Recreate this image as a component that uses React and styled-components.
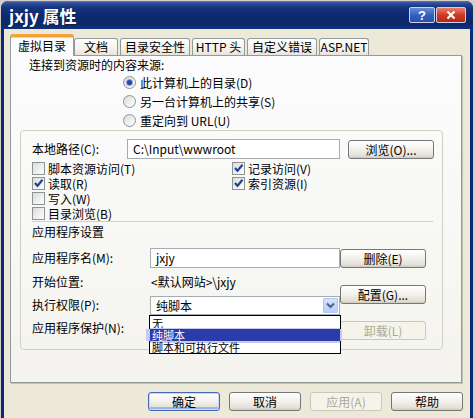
import React from 'react';
import styled, { createGlobalStyle, css } from 'styled-components';

const GlobalStyle = createGlobalStyle`
  html, body {
    margin: 0;
    padding: 0;
  }
  body {
    background: #d4d0c8;
    overflow: hidden;
    font-family: "Noto Sans CJK SC", "Liberation Sans", sans-serif;
    font-size: 12px;
    color: #000;
  }
  * { box-sizing: border-box; }
`;

const tabs = [
  { label: '虚拟目录', w: 60, active: true },
  { label: '文档', w: 44 },
  { label: '目录安全性', w: 70 },
  { label: 'HTTP 头', w: 53 },
  { label: '自定义错误', w: 70 },
  { label: 'ASP.NET', w: 50 },
];

const sources = [
  { label: '此计算机上的目录(D)', on: true },
  { label: '另一台计算机上的共享(S)' },
  { label: '重定向到 URL(U)' },
];

const checks = [
  { label: '脚本资源访问(T)' },
  { label: '记录访问(V)', on: true },
  { label: '读取(R)', on: true },
  { label: '索引资源(I)', on: true },
  { label: '写入(W)' },
  { label: '' },
  { label: '目录浏览(B)' },
];

const Checkbox = ({ on, children }) => (
  <CheckRow>
    <CheckBox>
      {on && (
        <svg width="11" height="11" viewBox="0 0 11 11">
          <path d="M2 5 L4.5 7.8 L9.5 1.8" fill="none" stroke="#21429c" strokeWidth="2.2" />
        </svg>
      )}
    </CheckBox>
    <span>{children}</span>
  </CheckRow>
);

const App = () => {
  return (
    <>
      <GlobalStyle />
      <Window>
        <TitleBar>
          <Title>jxjy 属性</Title>
          <TitleButtons>
            <HelpBtn>?</HelpBtn>
            <CloseBtn>
              <svg width="10" height="10" viewBox="0 0 10 10">
                <path d="M1.5 1.5 L8.5 8.5 M8.5 1.5 L1.5 8.5" stroke="#fff" strokeWidth="2.2" />
              </svg>
            </CloseBtn>
          </TitleButtons>
        </TitleBar>

        <Client>
          <TabStrip>
            {tabs.map((t) => (
              <Tab key={t.label} $w={t.w} $active={t.active}>{t.label}</Tab>
            ))}
          </TabStrip>

          <Panel>
            <Caption>连接到资源时的内容来源:</Caption>
            <RadioGroup>
              {sources.map((s) => (
                <RadioRow key={s.label}>
                  <RadioDot $on={s.on} />
                  <span>{s.label}</span>
                </RadioRow>
              ))}
            </RadioGroup>

            <Frame>
              <PathRow>
                <PathLabel>本地路径(C):</PathLabel>
                <TextBox $w={213}>C:\Input\wwwroot</TextBox>
                <Button>浏览(O)...</Button>
              </PathRow>

              <CheckGrid>
                {checks.map((c, i) =>
                  c.label ? <Checkbox key={i} on={c.on}>{c.label}</Checkbox> : <span key={i} />
                )}
              </CheckGrid>

              <Separator />
              <SectionTitle>应用程序设置</SectionTitle>

              <Lower>
                <FieldGrid>
                  <FieldLabel>应用程序名(M):</FieldLabel>
                  <TextBox $w={190}>jxjy</TextBox>

                  <FieldLabel>开始位置:</FieldLabel>
                  <FieldText>&lt;默认网站&gt;\jxjy</FieldText>

                  <FieldLabel>执行权限(P):</FieldLabel>
                  <Select>
                    <span>纯脚本</span>
                    <ArrowBtn>
                      <svg width="11" height="11" viewBox="0 0 11 11">
                        <path d="M2 3.5 L5.5 7 L9 3.5" fill="none" stroke="#4d6185" strokeWidth="2" />
                      </svg>
                    </ArrowBtn>
                    <DropList>
                      <DropItem>无</DropItem>
                      <DropItem $selected>纯脚本</DropItem>
                      <DropItem>脚本和可执行文件</DropItem>
                    </DropList>
                  </Select>

                  <FieldLabel>应用程序保护(N):</FieldLabel>
                  <span />
                </FieldGrid>

                <SideButtons>
                  <Button>删除(E)</Button>
                  <Button>配置(G)...</Button>
                  <Button $variant="disabled">卸载(L)</Button>
                </SideButtons>
              </Lower>
            </Frame>
          </Panel>

          <Footer>
            <Button $variant="focus" $w={72}>确定</Button>
            <Button $w={72}>取消</Button>
            <Button $variant="disabled" $w={72}>应用(A)</Button>
            <Button $w={72}>帮助</Button>
          </Footer>
        </Client>
      </Window>
    </>
  );
};

export default App;

const Window = styled.div`
  margin: 1px 2px 0 1px;
  width: 472px;
  height: 417px;
  display: flex;
  flex-direction: column;
  background: #0d2b74;
  border-radius: 7px 7px 0 0;
  overflow: hidden;
`;

const TitleBar = styled.div`
  height: 28px;
  flex: none;
  display: flex;
  align-items: center;
  justify-content: space-between;
  padding: 0 7px 0 8px;
  background: linear-gradient(
    to bottom,
    #5a78c4 0px,
    #2f4f9f 2px,
    #17367f 6px,
    #0d2a72 14px,
    #0c2869 22px,
    #10307c 28px
  );
`;

const Title = styled.div`
  color: #fff;
  font-weight: bold;
  font-size: 17px;
  line-height: 20px;
  text-shadow: 1px 1px 0 #0a1d4c;
  padding-top: 1px;
`;

const TitleButtons = styled.div`
  display: flex;
  gap: 1px;
`;

const titleBtn = css`
  height: 16px;
  display: flex;
  align-items: center;
  justify-content: center;
  border: 1px solid #c9d3ec;
  border-radius: 2px;
  color: #fff;
  font-family: "Liberation Sans", sans-serif;
  font-weight: bold;
  font-size: 13px;
`;

const HelpBtn = styled.div`
  ${titleBtn};
  width: 26px;
  background: linear-gradient(to bottom, #6b8ad4, #3560c0 50%, #2a50ac);
`;

const CloseBtn = styled.div`
  ${titleBtn};
  width: 30px;
  background: linear-gradient(to bottom, #e9806e, #cf3a24 50%, #b9260f);
`;

const Client = styled.div`
  flex: 1;
  margin: 0 3px;
  background: #ece9d8;
  padding: 5px 7px 0 6px;
  display: flex;
  flex-direction: column;
`;

const TabStrip = styled.div`
  height: 21px;
  display: flex;
  align-items: flex-end;
  gap: 2px;
  padding-left: 2px;
`;

const Tab = styled.div`
  width: ${(p) => p.$w}px;
  height: 17px;
  display: flex;
  align-items: center;
  justify-content: center;
  border: 1px solid #919b9c;
  border-bottom: none;
  border-radius: 3px 3px 0 0;
  background: linear-gradient(to bottom, #fffffe, #f3f2ec 60%, #e6e4da);
  line-height: 14px;
  white-space: nowrap;
  ${(p) =>
    p.$active &&
    css`
      position: relative;
      z-index: 2;
      width: ${p.$w + 4}px;
      height: 22px;
      margin: 0 -2px -1px;
      border-top: 3px solid #f2a33a;
      box-shadow: inset 0 1px 0 #ffd36b;
      background: #fcfcfe;
      padding-bottom: 1px;
    `}
`;

const Panel = styled.div`
  width: 452px;
  height: 328px;
  flex: none;
  border: 1px solid #919b9c;
  box-shadow: 1px 1px 0 #c3c1b4;
  background: linear-gradient(to bottom, #fcfcfe, #f7f7f4 60%, #f4f3ee);
  padding-top: 1px;
`;

const Caption = styled.div`
  margin-left: 18px;
  line-height: 16px;
`;

const RadioGroup = styled.div`
  display: flex;
  flex-direction: column;
  padding-left: 112px;
`;

const RadioRow = styled.div`
  height: 19px;
  display: flex;
  align-items: center;
  gap: 4px;
  line-height: 14px;
`;

const RadioDot = styled.span`
  width: 13px;
  height: 13px;
  border-radius: 50%;
  border: 1px solid #8a939b;
  background: linear-gradient(135deg, #dcdcd7, #ffffff);
  display: flex;
  align-items: center;
  justify-content: center;
  &::after {
    content: '';
    display: ${(p) => (p.$on ? 'block' : 'none')};
    width: 5px;
    height: 5px;
    border-radius: 50%;
    background: #2a47a6;
    box-shadow: 0 0 0 1px #8fa4dc;
  }
`;

const Frame = styled.div`
  width: 423px;
  margin-left: 9px;
  border: 1px solid #d0d0bf;
  border-radius: 4px;
  padding: 8px 0 8px 11px;
`;

const PathRow = styled.div`
  display: flex;
  align-items: flex-start;
`;

const PathLabel = styled.div`
  width: 95px;
  line-height: 20px;
`;

const TextBox = styled.div`
  width: ${(p) => p.$w}px;
  height: 20px;
  border: 1px solid #a5acb2;
  background: #fff;
  padding-left: 5px;
  line-height: 18px;
  margin-right: 8px;
  white-space: nowrap;
`;

const Button = styled.div`
  width: ${(p) => p.$w || 86}px;
  height: 19px;
  flex: none;
  display: flex;
  align-items: center;
  justify-content: center;
  margin-top: 1px;
  border: 1px solid #767676;
  border-radius: 3px;
  background: linear-gradient(to bottom, #ffffff, #f3f2ee 45%, #e4e1d8 85%, #cfcbbf);
  line-height: 14px;
  white-space: nowrap;
  ${(p) =>
    p.$variant === 'focus' &&
    css`
      border-color: #4866b8;
      box-shadow: inset 0 0 0 1px #c8d8f8, inset 0 -2px 0 1px #9ab6ec;
    `}
  ${(p) =>
    p.$variant === 'disabled' &&
    css`
      border-color: #c9c7ba;
      background: #f5f4ea;
      color: #aca899;
    `}
`;

const CheckGrid = styled.div`
  margin-top: 2px;
  display: grid;
  grid-template-columns: 200px 200px;
  grid-auto-rows: 15px;
`;

const CheckRow = styled.div`
  display: flex;
  align-items: center;
  gap: 3px;
  line-height: 14px;
  white-space: nowrap;
`;

const CheckBox = styled.span`
  width: 13px;
  height: 13px;
  flex: none;
  border: 1px solid #8e9398;
  background: linear-gradient(135deg, #dcdcd7, #ffffff);
  display: flex;
  align-items: center;
  justify-content: center;
`;

const Separator = styled.div`
  width: 401px;
  height: 1px;
  background: #d0d0bf;
`;

const SectionTitle = styled.div`
  margin-top: 2px;
  line-height: 16px;
`;

const Lower = styled.div`
  margin-top: 8px;
  display: flex;
`;

const FieldGrid = styled.div`
  display: grid;
  grid-template-columns: 118px 190px;
  grid-template-rows: 20px 27px 20px 26px;
  align-items: center;
`;

const FieldLabel = styled.div`
  line-height: 14px;
  white-space: nowrap;
`;

const FieldText = styled.div`
  line-height: 14px;
  padding-left: 1px;
`;

const Select = styled.div`
  position: relative;
  align-self: end;
  width: 190px;
  height: 19px;
  border: 1px solid #a5acb2;
  background: #fff;
  display: flex;
  align-items: center;
  justify-content: space-between;
  padding: 0 1px 0 5px;
  line-height: 14px;
`;

const ArrowBtn = styled.span`
  width: 15px;
  height: 15px;
  border: 1px solid #b3c6ee;
  border-radius: 1px;
  background: linear-gradient(to bottom, #d5e1fd, #b9cdf8);
  display: flex;
  align-items: center;
  justify-content: center;
`;

const DropList = styled.div`
  position: absolute;
  z-index: 5;
  top: calc(100% + 1px);
  left: -2px;
  width: 192px;
  border: 1px solid #000;
  background: #fff;
  padding-top: 1px;
  display: flex;
  flex-direction: column;
`;

const DropItem = styled.div`
  height: 12px;
  line-height: 12px;
  font-size: 11px;
  padding-left: 2px;
  white-space: nowrap;
  ${(p) =>
    p.$selected &&
    css`
      background: #2a3ca9;
      color: #fff;
      box-shadow: -4px 0 0 0 #c5caee, 2px 0 0 0 #c5caee, 0 -1px 0 0 #c5caee, 0 2px 0 0 #c5caee;
    `}
`;

const SideButtons = styled.div`
  display: flex;
  flex-direction: column;
  gap: 16px;
`;

const Footer = styled.div`
  margin-top: 8px;
  display: flex;
  justify-content: flex-end;
  gap: 9px;
`;
